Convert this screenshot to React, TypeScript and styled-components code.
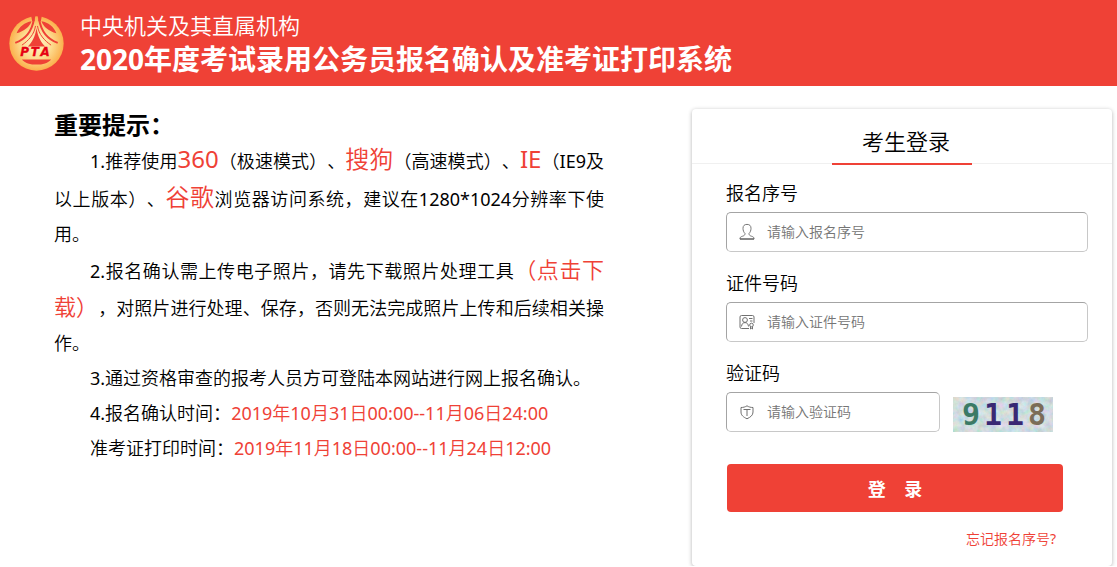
import React from 'react';
import styled, { createGlobalStyle } from 'styled-components';

const red = '#ef4136';
const boldFamily = '"Noto Sans", "Noto Sans CJK SC", sans-serif';

const GlobalStyle = createGlobalStyle`
  * { box-sizing: border-box; }
  body {
    margin: 0;
    background: #fff;
    color: #000;
    font-family: "Noto Sans", "Noto Sans CJK SC DemiLight", "Noto Sans CJK SC", sans-serif;
    font-size: 18px;
    font-weight: 400;
    text-spacing-trim: space-all;
  }
`;

const Header = styled.header`
  display: flex;
  align-items: center;
  gap: 16px;
  min-height: 86px;
  padding: 0 9px;
  background: ${red};
  color: #fff;
`;

const Titles = styled.div`
  display: flex;
  flex-direction: column;
`;

const Organisation = styled.p`
  margin: 0;
  font-size: 22px;
  line-height: 32px;
`;

const SystemName = styled.h1`
  margin: 0;
  font-family: ${boldFamily};
  font-size: 28px;
  line-height: 36px;
  font-weight: 700;
`;

const Content = styled.main`
  display: grid;
  grid-template-columns: minmax(0, 1fr) 420px;
  gap: 88px;
  align-items: start;
  padding: 23px 5px 0 54px;
`;

const Notice = styled.section`
  line-height: 35px;
`;

const NoticeTitle = styled.h2`
  margin: 0;
  font-family: ${boldFamily};
  font-size: 24px;
  line-height: 32px;
  font-weight: 700;
`;

const Paragraph = styled.p`
  margin: 0;
  text-indent: 36px;
  text-align: justify;
`;

const Strong = styled.span`
  color: ${red};
  font-size: 24px;
`;

const DownloadLink = styled.a`
  color: ${red};
  font-size: 22px;
  text-decoration: none;
`;

const Time = styled.span`
  color: ${red};
`;

const Card = styled.section`
  padding-bottom: 16px;
  border-radius: 4px;
  background: #fff;
  box-shadow: 0 1px 4px rgba(0, 0, 0, 0.3);
`;

const CardHeader = styled.div`
  display: flex;
  justify-content: center;
  height: 55px;
  border-bottom: 1px solid #f0f0f0;
`;

const CardTitle = styled.h2`
  width: 140px;
  height: 56px;
  margin: 0;
  padding: 12px 0 0 8px;
  border-bottom: 2px solid ${red};
  font-size: 22px;
  line-height: 40px;
  font-weight: inherit;
  text-align: center;
`;

const Form = styled.form`
  display: flex;
  flex-direction: column;
  padding: 14px 24px 0 34px;
`;

const Field = styled.div`
  display: flex;
  flex-direction: column;
  height: 90px;
`;

const Label = styled.label`
  padding-bottom: 4px;
  line-height: 30px;
`;

const FieldRow = styled.div`
  display: flex;
  align-items: center;
  gap: 13px;
`;

const InputBox = styled.div<{ $short?: boolean }>`
  display: flex;
  align-items: center;
  gap: 12px;
  flex: ${p => (p.$short ? '0 0 214px' : '1')};
  min-width: 0;
  height: 40px;
  padding: 0 12px;
  border: 1px solid;
  border-color: #a4a4a4 #c8c8c8 #c8c8c8 #a4a4a4;
  border-radius: 5px;
`;

const Input = styled.input`
  flex: 1;
  min-width: 0;
  padding: 0;
  border: 0;
  outline: 0;
  background: none;
  font-family: inherit;
  font-size: 14px;
  font-weight: inherit;
  line-height: 20px;
  &::placeholder { color: #757575; opacity: 1; }
`;

const CaptchaButton = styled.button`
  display: block;
  padding: 4px 0 0;
  border: 0;
  background: none;
  cursor: pointer;
  svg { display: block; }
`;

const Submit = styled.button`
  height: 48px;
  margin: 16px 25px 0 1px;
  border: 0;
  border-radius: 4px;
  background: ${red};
  color: #fff;
  font-family: ${boldFamily};
  font-size: 18px;
  font-weight: 700;
  white-space: pre;
  cursor: pointer;
`;

const ForgotLink = styled.a`
  align-self: flex-end;
  margin: 16px 32px 0 0;
  color: ${red};
  font-size: 14px;
  line-height: 22px;
  text-decoration: none;
`;

const Logo = () => (
  <svg width="55" height="56" viewBox="27 47 166 169" aria-hidden="true">
    <defs>
      <radialGradient id="gold">
        <stop offset="0" stopColor="#fff6c8" />
        <stop offset="0.55" stopColor="#fddc91" />
        <stop offset="1" stopColor="#fbb04c" />
      </radialGradient>
    </defs>
    <circle cx="110" cy="133" r="82" fill="url(#gold)" />
    <path d="M93 45H107L104 66L97 66zM127 45H113L116 66L123 66z" fill={red} />
    <path d="M50 102C58 82 74 70 95 66C90 82 72 97 50 102zM170 102C162 82 146 70 125 66C130 82 148 97 170 102z" fill={red} />
    <path d="M102 60C96 97 76 120 46 131M118 60C124 97 144 120 174 131" fill="none" stroke={red} strokeWidth="6" />
    <path d="M107 80C103 106 86 124 66 138M113 80C117 106 134 124 154 138" fill="none" stroke={red} strokeWidth="3" />
    <path d="M110 86C106 112 97 128 84 142H136C123 128 114 112 110 86z" fill={red} />
    <path d="M66 181H154C138 202 82 202 66 181z" fill={red} />
    <text x="61 93 122" y="172" fill="#e60012" stroke="#e60012" fontFamily="DejaVu Sans" fontWeight="700" fontStyle="italic" fontSize="36">PTA</text>
  </svg>
);

const UserIcon = () => (
  <svg width="16" height="18" viewBox="0 0 16 18" fill="none" stroke="#777" strokeLinejoin="round" aria-hidden="true">
    <path d="M6 10.5C4.7 9.2 4 7.4 4 5.3C4 2.7 5.4 1.4 8 1.4s4 1.3 4 3.900c0 2.100-.7 3.900-2 5.200c0 1.500.8 2.200 2.400 2.700c1.900.6 2.600 1 2.700 2.800H.9c.1-1.800.8-2.200 2.700-2.800C5.200 12.700 6 12 6 10.500z" />
    <path d="M1 16h14" stroke="#555" />
  </svg>
);

const IdCardIcon = () => (
  <svg width="16" height="16" viewBox="0 0 16 16" fill="none" stroke="#707070" aria-hidden="true">
    <path d="M10 14.500H2.500a1.500 1.500 0 0 1-1.500-1.500V3A1.500 1.500 0 0 1 2.500 1.500h11A1.500 1.500 0 0 1 15 3v6" />
    <circle cx="6" cy="6" r="2.400" />
    <path d="M2.500 12.500C2.700 10 4 8.600 6 8.600s3.300 1.400 3.500 3.900M10 4.500h3.500M11 7h2.500" />
    <circle cx="12.500" cy="11" r="1.800" />
    <path d="M11.500 12.800V15l1-.6 1 .6v-2.200" />
  </svg>
);

const ShieldIcon = () => (
  <svg width="16" height="16" viewBox="0 0 16 16" fill="none" stroke="#707070" strokeLinejoin="round" aria-hidden="true">
    <path d="M8 1.800C6.200 3 4.300 3.500 2 3.500V8c0 3.300 2.300 5 6 6.800C11.700 13 14 11.300 14 8V3.500C11.700 3.500 9.800 3 8 1.800z" />
    <path d="M4.500 5.500h7M8 5.500V12" />
  </svg>
);

const captchaDigits = [
  { digit: '9', x: 9, color: '#3b7a66' },
  { digit: '1', x: 31, color: '#392873' },
  { digit: '1', x: 53, color: '#392873' },
  { digit: '8', x: 75, color: '#7b6c58' },
];

const Captcha = () => (
  <svg width="100" height="35" viewBox="0 0 100 35" role="img" aria-label="验证码图片">
    <defs>
      <filter id="grain" x="0" y="0" width="1" height="1">
        <feTurbulence type="fractalNoise" baseFrequency="0.16" numOctaves="3" seed="8" />
        <feColorMatrix values="0.8 0 0 0 0.32  0 0.5 0 0 0.53  0 0 0.6 0 0.5  0 0 0 0 1" />
      </filter>
    </defs>
    <rect width="100" height="35" fill="#c5cfd2" filter="url(#grain)" />
    <rect width="100" height="35" fill="#a9c0c8" opacity="0.25" />
    <g fontFamily="DejaVu Sans Mono" fontWeight="700" fontSize="30">
      {captchaDigits.map(d => (
        <text key={d.x} x={d.x} y="28" fill={d.color}>{d.digit}</text>
      ))}
    </g>
  </svg>
);

export default function App() {
  return (
    <>
      <GlobalStyle />
      <Header>
        <Logo />
        <Titles>
          <Organisation>中央机关及其直属机构</Organisation>
          <SystemName>2020年度考试录用公务员报名确认及准考证打印系统</SystemName>
        </Titles>
      </Header>
      <Content>
        <Notice>
          <NoticeTitle>重要提示：</NoticeTitle>
          <Paragraph>
            1.推荐使用<Strong>360</Strong>（极速模式）、<Strong>搜狗</Strong>（高速模式）、<Strong>IE</Strong>（IE9及以上版本）、<Strong>谷歌</Strong>浏览器访问系统，建议在1280*1024分辨率下使用。
          </Paragraph>
          <Paragraph>
            2.报名确认需上传电子照片，请先下载照片处理工具<DownloadLink href="#download">（点击下载）</DownloadLink>，对照片进行处理、保存，否则无法完成照片上传和后续相关操作。
          </Paragraph>
          <Paragraph>3.通过资格审查的报考人员方可登陆本网站进行网上报名确认。</Paragraph>
          <Paragraph>4.报名确认时间：<Time>2019年10月31日00:00--11月06日24:00</Time></Paragraph>
          <Paragraph>准考证打印时间：<Time>2019年11月18日00:00--11月24日12:00</Time></Paragraph>
        </Notice>
        <Card>
          <CardHeader>
            <CardTitle>考生登录</CardTitle>
          </CardHeader>
          <Form onSubmit={e => e.preventDefault()}>
            <Field>
              <Label htmlFor="serial">报名序号</Label>
              <FieldRow>
                <InputBox>
                  <UserIcon />
                  <Input id="serial" type="text" placeholder="请输入报名序号" />
                </InputBox>
              </FieldRow>
            </Field>
            <Field>
              <Label htmlFor="idNumber">证件号码</Label>
              <FieldRow>
                <InputBox>
                  <IdCardIcon />
                  <Input id="idNumber" type="text" placeholder="请输入证件号码" />
                </InputBox>
              </FieldRow>
            </Field>
            <Field>
              <Label htmlFor="captcha">验证码</Label>
              <FieldRow>
                <InputBox $short>
                  <ShieldIcon />
                  <Input id="captcha" type="text" placeholder="请输入验证码" />
                </InputBox>
                <CaptchaButton type="button">
                  <Captcha />
                </CaptchaButton>
              </FieldRow>
            </Field>
            <Submit type="submit">{'登    录'}</Submit>
            <ForgotLink href="#forgot">忘记报名序号?</ForgotLink>
          </Form>
        </Card>
      </Content>
    </>
  );
}
